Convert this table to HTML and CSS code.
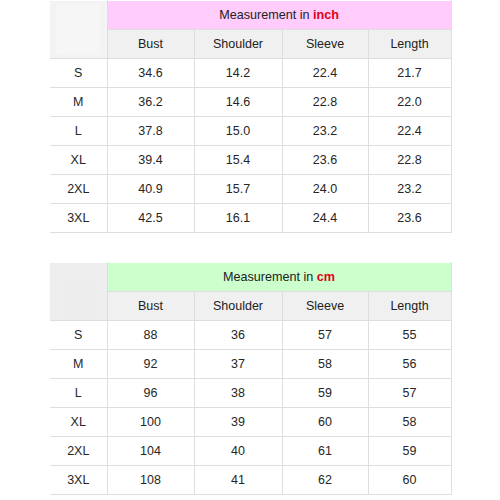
FILE: index.html
```html
<!DOCTYPE html>
<html>
<head>
<meta charset="utf-8">
<link rel="stylesheet" href="styles.css">
</head>
<body>
<div class="page">
  <table class="size-table">
    <colgroup>
      <col class="c0"><col class="c1"><col class="c2"><col class="c3"><col class="c4">
    </colgroup>
    <tr>
      <td class="corner corner-inch" rowspan="2"><div class="blur"></div></td>
      <td class="title title-inch" colspan="4">Measurement in <b class="unit">inch</b></td>
    </tr>
    <tr class="head"><td>Bust</td><td>Shoulder</td><td>Sleeve</td><td>Length</td></tr>
    <tr><td class="size">S</td><td>34.6</td><td>14.2</td><td>22.4</td><td>21.7</td></tr>
    <tr><td class="size">M</td><td>36.2</td><td>14.6</td><td>22.8</td><td>22.0</td></tr>
    <tr><td class="size">L</td><td>37.8</td><td>15.0</td><td>23.2</td><td>22.4</td></tr>
    <tr><td class="size">XL</td><td>39.4</td><td>15.4</td><td>23.6</td><td>22.8</td></tr>
    <tr><td class="size">2XL</td><td>40.9</td><td>15.7</td><td>24.0</td><td>23.2</td></tr>
    <tr><td class="size">3XL</td><td>42.5</td><td>16.1</td><td>24.4</td><td>23.6</td></tr>
  </table>

  <table class="size-table second">
    <colgroup>
      <col class="c0"><col class="c1"><col class="c2"><col class="c3"><col class="c4">
    </colgroup>
    <tr>
      <td class="corner corner-cm" rowspan="2"><div class="blur blur-cm"></div></td>
      <td class="title title-cm" colspan="4">Measurement in <b class="unit">cm</b></td>
    </tr>
    <tr class="head"><td>Bust</td><td>Shoulder</td><td>Sleeve</td><td>Length</td></tr>
    <tr><td class="size">S</td><td>88</td><td>36</td><td>57</td><td>55</td></tr>
    <tr><td class="size">M</td><td>92</td><td>37</td><td>58</td><td>56</td></tr>
    <tr><td class="size">L</td><td>96</td><td>38</td><td>59</td><td>57</td></tr>
    <tr><td class="size">XL</td><td>100</td><td>39</td><td>60</td><td>58</td></tr>
    <tr><td class="size">2XL</td><td>104</td><td>40</td><td>61</td><td>59</td></tr>
    <tr><td class="size">3XL</td><td>108</td><td>41</td><td>62</td><td>60</td></tr>
  </table>
</div>
</body>
</html>
```
FILE: styles.css
```css
html, body {
  margin: 0;
  padding: 0;
  background: #ffffff;
}
.page {
  padding: 0 0 0 50px;
  font-family: "Liberation Sans", Arial, sans-serif;
  font-size: 12.5px;
  color: #262626;
}
.size-table {
  border-collapse: collapse;
  table-layout: fixed;
  width: 401px;
}
.size-table.second {
  margin-top: 29px;
}
.c0 { width: 57px; }
.c1 { width: 87px; }
.c2 { width: 88px; }
.c3 { width: 86px; }
.c4 { width: 83px; }
.size-table td {
  border: 1px solid #dedede;
  height: 28px;
  padding: 0;
  text-align: center;
  vertical-align: middle;
}
.size-table tr td:first-child {
  border-left: none;
}
.size-table tr:first-child td {
  border-top-color: #ffffff;
}
.head td {
  background: #f0f0f0;
  color: #222222;
}
.title {
  font-size: 12.6px;
  color: #222222;
}
.title-inch {
  background: #ffccfc;
  padding-left: 10px;
}
.title-cm {
  background: #ccffcc;
}
.unit {
  color: #e0001b;
}
.corner {
  background: #f2f2f2;
}
.corner-inch {
  background: #f3f3f3;
}
.corner-cm {
  background: #eeeeee;
}
.blur {
  margin: 0 auto;
  width: 44px;
  height: 50px;
  background: #f6f6f6;
  border-radius: 4px;
}
.blur-cm {
  width: 38px;
  height: 36px;
  margin-top: 16px;
  background: #ecedec;
}
```
